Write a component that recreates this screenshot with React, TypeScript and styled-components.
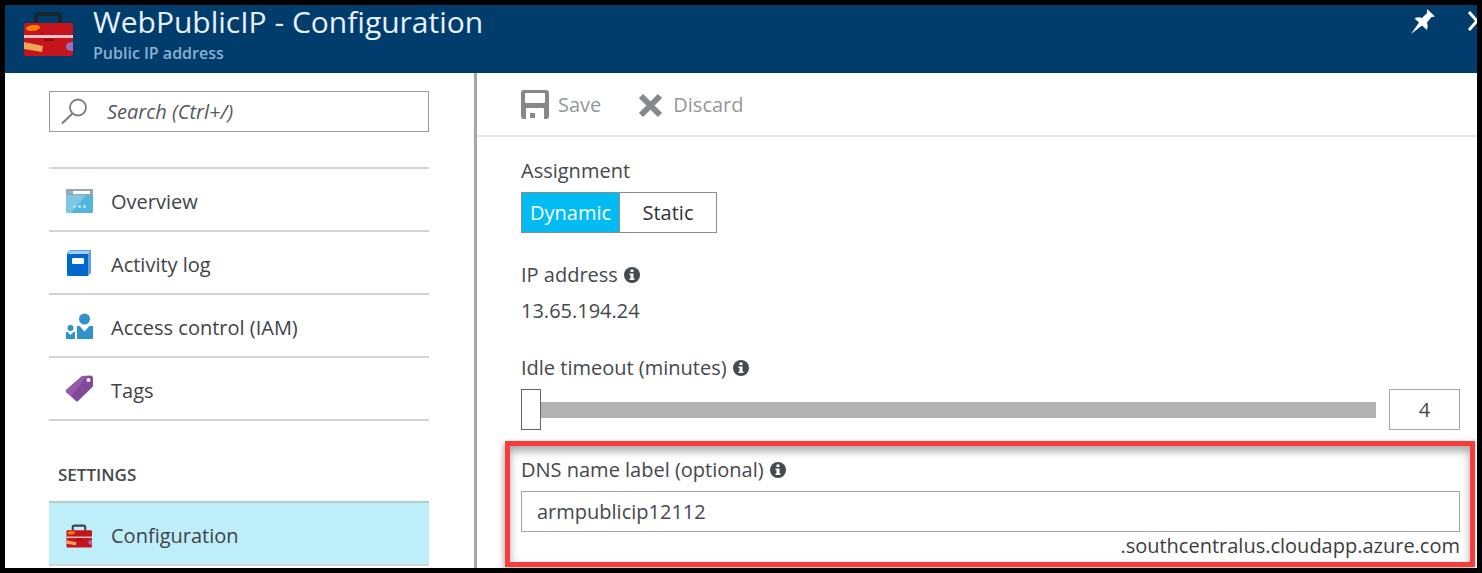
import React, { useState } from "react";
import styled, { createGlobalStyle } from "styled-components";

const GlobalStyle = createGlobalStyle`
  * { box-sizing: border-box; }
  body {
    margin: 0;
    background: #000;
    color: #45484c;
    font-family: "Open Sans", "Noto Sans", sans-serif;
    font-size: 20px;
    line-height: 28px;
  }
  button, input { font: inherit; color: inherit; }
`;

const Blade = styled.div`
  display: flex;
  flex-direction: column;
  min-height: 100vh;
  border: 5px solid #000;
  background: #fff;
  overflow-x: clip;
`;

const Header = styled.header`
  display: flex;
  height: 68px;
  padding-left: 18px;
  background: #003d6d;
  color: #fff;
`;

const Titles = styled.div`
  flex: 1;
  padding-left: 18px;
`;

const Title = styled.h1`
  margin: 0;
  font-size: 30px;
  line-height: 34px;
  font-weight: 400;
  color: #e6f1fb;
`;

const Subtitle = styled.p`
  margin: 0;
  font-size: 16px;
  line-height: 28px;
  font-weight: 600;
  color: #8db0d0;
`;

const HeaderActions = styled.div`
  display: flex;
  align-items: flex-start;
  gap: 31px;
  padding-top: 4px;
  margin-right: -10px;
`;

const IconButton = styled.button`
  display: flex;
  padding: 0;
  border: 0;
  background: none;
  color: #fff;
  cursor: pointer;
`;

const Body = styled.div`
  display: flex;
  flex: 1;
`;

const Sidebar = styled.aside`
  flex: 0 0 472px;
  padding: 18px 45px 2px 44px;
  border-right: 3px solid #a6a6a6;
`;

const SearchBox = styled.label`
  display: flex;
  align-items: center;
  gap: 19px;
  height: 41px;
  padding-left: 11px;
  border: 1px solid #999;
`;

const SearchInput = styled.input`
  flex: 1;
  min-width: 0;
  padding: 0;
  border: 0;
  outline: 0;
  background: none;
  font-style: italic;
  &::placeholder { color: #55585c; opacity: 1; }
`;

const NavList = styled.ul<{ $spaced?: boolean }>`
  margin: ${(p) => (p.$spaced ? "35px" : "0")} 0 0;
  padding: 0;
  list-style: none;
  border-bottom: 2px solid #d2d3d4;
`;

const NavLink = styled.a<{ $active?: boolean }>`
  display: flex;
  align-items: center;
  gap: 18px;
  height: 63px;
  padding: 4px 16px 0 17px;
  border-top: 2px solid ${(p) => (p.$active ? "#b2cdd6" : "#d2d3d4")};
  background: ${(p) => (p.$active ? "#beeefa" : "transparent")};
  color: #3f4347;
  text-decoration: none;
`;

const NavHeading = styled.h2`
  margin: 0;
  padding: 40px 0 12px 9px;
  font-size: 17px;
  line-height: 28px;
  font-weight: 600;
  color: #45484c;
`;

const Main = styled.main`
  flex: 1;
  min-width: 0;
  padding-bottom: 1px;
`;

const Toolbar = styled.div`
  display: flex;
  gap: 37px;
  height: 64px;
  padding: 2px 0 0 44px;
  border-bottom: 2px solid #e6e6e6;
`;

const Command = styled.button<{ $gap: number }>`
  display: flex;
  align-items: center;
  gap: ${(p) => p.$gap}px;
  padding: 0;
  border: 0;
  background: none;
  color: #94979b;
  cursor: pointer;
`;

const Form = styled.form`
  display: flex;
  flex-direction: column;
  gap: 28px;
  padding: 20px 17px 0 44px;
`;

const Field = styled.div`
  display: flex;
  flex-direction: column;
  gap: 7px;
`;

const ToggleField = styled.fieldset`
  margin: 0;
  padding: 0;
  border: 0;
`;

const ToggleLegend = styled.legend`
  padding: 0;
  margin-bottom: 7px;
`;

const LabelRow = styled.div`
  display: flex;
  align-items: center;
  gap: 6px;
`;

const AddressValue = styled.output`
  padding: 1px 0;
`;

const Toggle = styled.div`
  display: inline-flex;
  vertical-align: top;
  height: 41px;
  border: 1px solid #8c8c8c;
`;

const ToggleOption = styled.label<{ $on: boolean }>`
  display: flex;
  align-items: center;
  justify-content: center;
  width: 97px;
  background: ${(p) => (p.$on ? "#00bcf2" : "#fff")};
  color: ${(p) => (p.$on ? "#fff" : "#2f3236")};
  cursor: pointer;
  & + & { border-left: 1px solid #8c8c8c; }
`;

const HiddenRadio = styled.input`
  appearance: none;
  width: 0;
  height: 0;
  margin: 0;
`;

const SliderRow = styled.div`
  display: flex;
  gap: 13px;
`;

const Slider = styled.input`
  appearance: none;
  flex: 1;
  min-width: 0;
  height: 41px;
  margin: 0;
  background: none;
  &::-webkit-slider-runnable-track {
    height: 16px;
    background: #b2b2b2;
  }
  &::-webkit-slider-thumb {
    appearance: none;
    width: 20px;
    height: 41px;
    margin-top: -13px;
    border: 1px solid #666;
    border-radius: 0;
    background: #fff;
  }
`;

const TextBox = styled.input<{ $compact?: boolean }>`
  width: ${(p) => (p.$compact ? "71px" : "100%")};
  height: 41px;
  padding: 0 ${(p) => (p.$compact ? "4px" : "15px")};
  border: 1px solid #a6a6a6;
  border-radius: 0;
  outline: 0;
  background: #fff;
  text-align: ${(p) => (p.$compact ? "center" : "left")};
`;

const Highlight = styled.section`
  margin: 11px 2px 0 28px;
  padding: 10px 10px 2px 11px;
  border: 5px solid #fb3b3b;
  box-shadow: inset 0 5px 8px rgba(0, 0, 0, 0.35), -2px 2px 5px rgba(0, 0, 0, 0.25);
`;

const Suffix = styled.div`
  text-align: right;
  color: #3a3d41;
`;

const Toolbox = ({ large }: { large?: boolean }) => (
  <svg width={large ? 52 : 27} height={large ? 68 : 26} viewBox={large ? "0 0 52 68" : "0 0 52 50"} aria-hidden="true">
    <g transform={large ? "translate(0 5)" : "translate(0 1)"}>
      <path d="M13 14V7q0-3 3-3h18q3 0 3 3v7" fill="none" stroke={large ? "#1b2530" : "#3b4650"} strokeWidth="4" />
      <rect x="1" y="13" width="49" height="33" rx="2" fill="#c5141b" />
      <ellipse cx="10" cy="18" rx="7" ry="3" fill="#ff7f0c" transform="rotate(-6 10 18)" />
      <path d="M1 25h49v3H1z" fill="#f3c3c6" />
      <path d="M21 29h10v2H21z" fill="#7b1115" />
      <path d="M1 32l19 4-1 6-18-3z" fill="#f0a45c" />
      <path d="M50 32q-7 0-7 4.500t7 4.500z" fill="#a06cc0" />
    </g>
  </svg>
);

const PinIcon = () => (
  <svg width="26" height="26" viewBox="0 0 26 26" aria-hidden="true">
    <path d="M17 0l8 7.500-3.500.500-4.500 5.500q1.500 4 0 7.500l-5-4.500L1 25l8-11.500L4.500 9.500q4-2 7.500-.500l5-5z" fill="#fff" />
  </svg>
);

const CloseIcon = () => (
  <svg width="20" height="32" viewBox="0 0 20 32" aria-hidden="true">
    <path d="M2 3l16 18M18 3L2 21" fill="none" stroke="#fff" strokeWidth="3" />
  </svg>
);

const SearchIcon = () => (
  <svg width="27" height="27" viewBox="0 0 27 27" aria-hidden="true">
    <circle cx="17" cy="9.500" r="8" fill="none" stroke="#7a7d80" strokeWidth="1.800" />
    <path d="M11.500 15.500L1 25.500" stroke="#7a7d80" strokeWidth="2" />
  </svg>
);

const OverviewIcon = () => (
  <svg width="27" height="26" viewBox="0 0 27 26" aria-hidden="true">
    <rect width="27" height="24" rx="1" fill="#53b5dc" />
    <path d="M0 6h20L5 24H0z" fill="#7cc8e4" />
    <path d="M0 1q0-1 1-1h25q1 0 1 1v5H0z" fill="#9da5aa" />
    <path d="M7 2h17v3H7z" fill="#fff" />
    <path d="M2 2h3v2H2z" fill="#6fc3e0" />
    <path d="M7 16h3v3H7zM12 16h3v3h-3zM17 16h3v3h-3z" fill="#a5dcf0" />
  </svg>
);

const LogIcon = () => (
  <svg width="27" height="32" viewBox="0 0 27 32" aria-hidden="true">
    <path d="M1 4l3-3h21v23l-3 3H1z" fill="#5ea0dc" />
    <path d="M1 5h21v22H3q-2 0-2-2z" fill="#0068cc" />
    <path d="M4 2h20l-2 3H2z" fill="#a9cdee" />
    <rect x="6" y="9" width="12" height="6" rx="1" fill="#fff" />
  </svg>
);

const PeopleIcon = () => (
  <svg width="27" height="30" viewBox="0 0 27 30" aria-hidden="true">
    <g fill="#2f93c9">
      <circle cx="18.500" cy="6" r="5.500" />
      <path d="M11 13h2.500l5 5.500 5-5.500H27v13H11z" />
      <circle cx="4.500" cy="15" r="3" />
      <path d="M0 19h1.500l3 3 3-3H9v7H0z" />
    </g>
  </svg>
);

const TagIcon = () => (
  <svg width="27" height="32" viewBox="0 0 27 32" aria-hidden="true">
    <path d="M0 15L15 2q1-1 2-1l7-.500q3 0 3 3v7q0 1-1 2L12 26q-1 1-2 0L0 17q-1-1 0-2z" fill="#83489b" />
    <path d="M0 15L15 2q1-1 2-1l4 0L5 21 0 17q-1-1 0-2z" fill="#955bab" />
    <circle cx="22.500" cy="5" r="2" fill="#fff" />
  </svg>
);

const SaveIcon = () => (
  <svg width="28" height="30" viewBox="0 0 28 30" aria-hidden="true">
    <rect width="28" height="29" rx="3" fill="#85888c" />
    <rect x="4" y="3" width="20" height="10" rx="1" fill="#fff" />
    <path d="M5 30V19q0-1 1-1h16q1 0 1 1v11z" fill="#fff" />
    <rect x="9" y="23" width="5" height="5" fill="#85888c" />
  </svg>
);

const DiscardIcon = () => (
  <svg width="25" height="25" viewBox="0 0 25 25" aria-hidden="true">
    <path d="M3 3l19 19M22 3L3 22" stroke="#85888c" strokeWidth="6" />
  </svg>
);

const InfoIcon = () => (
  <svg width="16" height="16" viewBox="0 0 16 16" aria-hidden="true">
    <circle cx="8" cy="8" r="8" fill="#454a50" />
    <path d="M6.500 2.500h3v2.500h-3zM5.500 6.500h4v5h1V13h-5v-1.500h1V8h-1z" fill="#fff" />
  </svg>
);

const resourceLinks = [
  { label: "Overview", icon: <OverviewIcon /> },
  { label: "Activity log", icon: <LogIcon /> },
  { label: "Access control (IAM)", icon: <PeopleIcon /> },
  { label: "Tags", icon: <TagIcon /> },
];

export default function App() {
  const [assignment, setAssignment] = useState("Dynamic");
  const [timeout, setTimeoutMinutes] = useState("4");
  const [dns, setDns] = useState("armpublicip12112");

  return (
    <>
      <GlobalStyle />
      <Blade>
        <Header>
          <Toolbox large />
          <Titles>
            <Title>WebPublicIP - Configuration</Title>
            <Subtitle>Public IP address</Subtitle>
          </Titles>
          <HeaderActions>
            <IconButton type="button" aria-label="Pin"><PinIcon /></IconButton>
            <IconButton type="button" aria-label="Close"><CloseIcon /></IconButton>
          </HeaderActions>
        </Header>
        <Body>
          <Sidebar>
            <SearchBox>
              <SearchIcon />
              <SearchInput type="text" aria-label="Search" placeholder="Search (Ctrl+/)" />
            </SearchBox>
            <nav>
              <NavList $spaced>
                {resourceLinks.map((item) => (
                  <li key={item.label}>
                    <NavLink href="#">{item.icon}{item.label}</NavLink>
                  </li>
                ))}
              </NavList>
              <NavHeading>SETTINGS</NavHeading>
              <NavList>
                <li>
                  <NavLink href="#" $active aria-current="page"><Toolbox />Configuration</NavLink>
                </li>
              </NavList>
            </nav>
          </Sidebar>
          <Main>
            <Toolbar>
              <Command type="button" $gap={9}><SaveIcon />Save</Command>
              <Command type="button" $gap={10}><DiscardIcon />Discard</Command>
            </Toolbar>
            <Form>
              <ToggleField>
                <ToggleLegend>Assignment</ToggleLegend>
                <Toggle>
                  {["Dynamic", "Static"].map((option) => (
                    <ToggleOption key={option} $on={assignment === option}>
                      <HiddenRadio
                        type="radio"
                        name="assignment"
                        checked={assignment === option}
                        onChange={() => setAssignment(option)}
                      />
                      {option}
                    </ToggleOption>
                  ))}
                </Toggle>
              </ToggleField>
              <Field>
                <LabelRow><label htmlFor="address">IP address</label><InfoIcon /></LabelRow>
                <AddressValue id="address">13.65.194.24</AddressValue>
              </Field>
              <Field>
                <LabelRow><label htmlFor="timeout">Idle timeout (minutes)</label><InfoIcon /></LabelRow>
                <SliderRow>
                  <Slider
                    id="timeout"
                    type="range"
                    min="4"
                    max="30"
                    value={timeout}
                    onChange={(e) => setTimeoutMinutes(e.target.value)}
                  />
                  <TextBox
                    $compact
                    type="text"
                    aria-label="Idle timeout in minutes"
                    value={timeout}
                    onChange={(e) => setTimeoutMinutes(e.target.value)}
                  />
                </SliderRow>
              </Field>
            </Form>
            <Highlight>
              <Field>
                <LabelRow><label htmlFor="dns">DNS name label (optional)</label><InfoIcon /></LabelRow>
                <TextBox id="dns" type="text" value={dns} onChange={(e) => setDns(e.target.value)} />
              </Field>
              <Suffix>.southcentralus.cloudapp.azure.com</Suffix>
            </Highlight>
          </Main>
        </Body>
      </Blade>
    </>
  );
}
